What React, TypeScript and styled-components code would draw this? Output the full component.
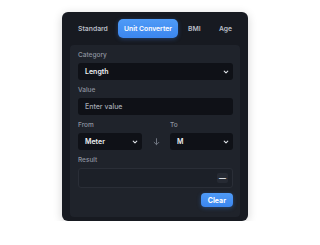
import React from 'react'
import styled, { createGlobalStyle, css } from 'styled-components'

const GlobalStyle = createGlobalStyle`
  html, body {
    margin: 0;
    padding: 0;
    background: #ffffff;
  }
  body {
    font-family: Inter, 'Noto Sans', sans-serif;
  }
  * {
    box-sizing: border-box;
  }
`

const Card = styled.div`
  width: 186px;
  margin: 12px 0 0 62px;
  padding: 7px 8px 4px 8px;
  background: #171a21;
  border-radius: 6px;
  box-shadow: 0 2px 10px rgba(0, 0, 0, 0.18);
  display: flex;
  flex-direction: column;
  gap: 7px;
`

const Tabs = styled.div`
  display: flex;
  justify-content: space-between;
  align-items: center;
  height: 19px;
`

const Tab = styled.div<{ active?: boolean }>`
  height: 19px;
  padding: 0 8px;
  display: flex;
  align-items: center;
  font-size: 6.8px;
  font-weight: 600;
  color: #b9bec7;
  border-radius: 5px;
  white-space: nowrap;
  ${({ active }) =>
    active &&
    css`
      padding: 0 6px;
      background: linear-gradient(180deg, #4f9bf7 0%, #3b86ef 100%);
      color: #ffffff;
      box-shadow: 0 1px 4px rgba(59, 134, 239, 0.35);
    `}
`

const Panel = styled.div`
  background: #1f232b;
  border-radius: 4px;
  padding: 5px 7px 10px 8px;
  display: flex;
  flex-direction: column;
`

const Field = styled.div`
  display: flex;
  flex-direction: column;
  gap: 3px;
  margin-bottom: 5px;
`

const Label = styled.div`
  height: 10px;
  line-height: 10px;
  font-size: 6.5px;
  font-weight: 500;
  color: #8f95a0;
`

const Box = styled.div`
  height: 17px;
  background: #0f1117;
  border-radius: 3px;
  display: flex;
  align-items: center;
  justify-content: space-between;
  padding: 0 4px 0 7px;
  font-size: 7px;
  font-weight: 600;
  color: #eef0f3;
`

const Placeholder = styled.span`
  font-weight: 500;
  color: #a3a8b1;
`

const Pair = styled.div`
  display: grid;
  grid-template-columns: 64px 1fr 63px;
  margin-bottom: 5px;

  ${Field} {
    margin-bottom: 0;
  }
`

const Arrow = styled.div`
  display: flex;
  align-items: flex-end;
  justify-content: center;
  padding-bottom: 4px;
`

const ResultField = styled(Field)`
  margin-bottom: 0;
`

const ResultBox = styled.div`
  height: 20px;
  border: 1px solid #2a2e37;
  border-radius: 3px;
  background: #1c2028;
  display: flex;
  align-items: center;
  justify-content: flex-end;
  padding-right: 4px;
`

const Dash = styled.span`
  display: inline-flex;
  align-items: center;
  justify-content: center;
  width: 11px;
  height: 10px;
  border-radius: 2px;
  background: #262a33;
  font-size: 7px;
  font-weight: 700;
  color: #e8eaee;
`

const Footer = styled.div`
  display: flex;
  justify-content: flex-end;
  margin-top: 5px;
`

const ClearButton = styled.button`
  height: 14px;
  padding: 0 7px;
  border: none;
  border-radius: 4px;
  background: linear-gradient(180deg, #4f9bf7 0%, #3b86ef 100%);
  color: #ffffff;
  font-family: Inter, 'Noto Sans', sans-serif;
  font-size: 7px;
  font-weight: 700;
  box-shadow: 0 1px 4px rgba(59, 134, 239, 0.35);
`

const Chevron = () => (
  <svg width="6" height="6" viewBox="0 0 10 10">
    <path d="M2 3.5 L5 6.5 L8 3.5" fill="none" stroke="#dfe2e7" strokeWidth="1.8" strokeLinecap="round" strokeLinejoin="round" />
  </svg>
)

const DownArrow = () => (
  <svg width="7" height="8" viewBox="0 0 10 12">
    <path d="M5 1 V10 M1.5 6.5 L5 10 L8.5 6.5" fill="none" stroke="#6f7580" strokeWidth="1.5" strokeLinecap="round" strokeLinejoin="round" />
  </svg>
)

const tabs = ['Standard', 'Unit Converter', 'BMI', 'Age']

export default function App() {
  return (
    <>
      <GlobalStyle />
      <Card>
        <Tabs>
          {tabs.map((t) => (
            <Tab key={t} active={t === 'Unit Converter'}>
              {t}
            </Tab>
          ))}
        </Tabs>
        <Panel>
          <Field>
            <Label>Category</Label>
            <Box>
              Length
              <Chevron />
            </Box>
          </Field>
          <Field>
            <Label>Value</Label>
            <Box>
              <Placeholder>Enter value</Placeholder>
            </Box>
          </Field>
          <Pair>
            <Field>
              <Label>From</Label>
              <Box>
                Meter
                <Chevron />
              </Box>
            </Field>
            <Arrow>
              <DownArrow />
            </Arrow>
            <Field>
              <Label>To</Label>
              <Box>
                M
                <Chevron />
              </Box>
            </Field>
          </Pair>
          <ResultField>
            <Label>Result</Label>
            <ResultBox>
              <Dash>—</Dash>
            </ResultBox>
          </ResultField>
          <Footer>
            <ClearButton>Clear</ClearButton>
          </Footer>
        </Panel>
      </Card>
    </>
  )
}
